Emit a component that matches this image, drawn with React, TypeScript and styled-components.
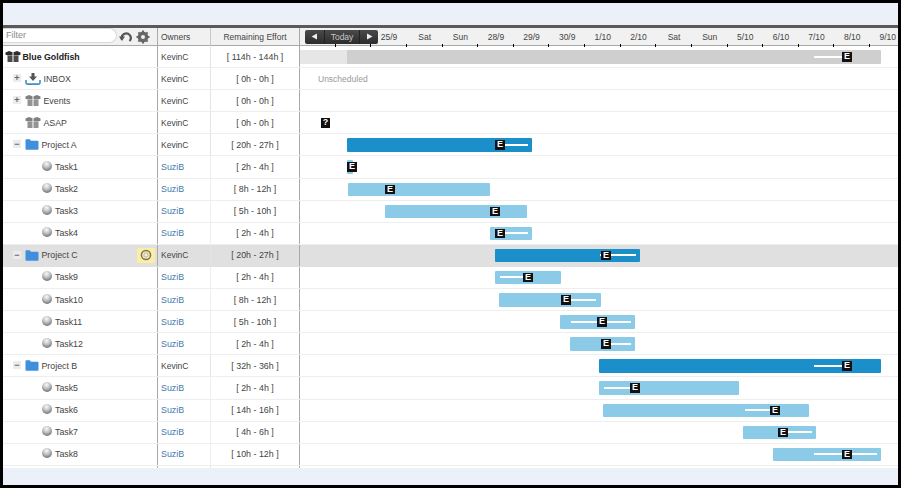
import React from "react";
import styled, { createGlobalStyle } from "styled-components";

const Global = createGlobalStyle`
  html, body { margin: 0; padding: 0; background: #fff; }
  * { box-sizing: border-box; }
`;

const Frame = styled.div`
  width: 901px;
  height: 488px;
  border: 3px solid #000;
  background: #ecf1f9;
  display: flex;
  flex-direction: column;
  font-family: "Liberation Sans", Arial, sans-serif;
  font-size: 8.5px;
  color: #333;
  overflow: hidden;
`;
const TopBand = styled.div`
  height: 25px;
  flex: none;
  border-bottom: 3px solid #5a5a5a;
`;
const Columns = `
  display: grid;
  grid-template-columns: 155px 53px 89px 1fr;
`;
const HeaderRow = styled.div`
  ${Columns}
  height: 18px;
  flex: none;
  background: #f1f1f1;
  border-bottom: 1px solid #a9a9a9;
`;
const FilterCell = styled.div`
  display: flex;
  align-items: flex-start;
  border-right: 1px solid #a9a9a9;
`;
const FilterInput = styled.div`
  width: 114px;
  height: 15px;
  background: #fff;
  border: 1px solid #d8d8d8;
  border-left: none;
  border-radius: 0 8px 8px 0;
  color: #8a8a8a;
  font-size: 9px;
  line-height: 12px;
  padding-left: 3px;
  margin-right: 2px;
`;
const ToolIcon = styled.svg`
  width: 14px;
  height: 14px;
  flex: none;
  margin-top: 1.5px;
  margin-right: 3px;
`;
const HeadOwner = styled.div`
  padding-left: 3px;
  line-height: 19px;
  color: #444;
  border-right: 1px solid #c8c8c8;
`;
const HeadEffort = styled.div`
  text-align: center;
  line-height: 19px;
  color: #444;
  border-right: 1px solid #a9a9a9;
`;
const Scale = styled.div`
  position: relative;
  display: flex;
  overflow: hidden;
`;
const Day = styled.div`
  position: relative;
  flex: none;
  width: 35.63px;
  text-align: center;
  line-height: 18px;
  color: #444;
  &::after {
    content: "";
    position: absolute;
    right: 0;
    bottom: 0;
    width: 1px;
    height: 3px;
    background: #000;
  }
`;
const Nav = styled.div`
  position: absolute;
  left: 5px;
  top: 1.5px;
  width: 73px;
  height: 14px;
  display: flex;
  background: linear-gradient(#4a4a4a, #2c2c2c);
  border-radius: 2px;
  color: #c8c8c8;
`;
const NavButton = styled.div<{ $wide?: boolean }>`
  ${(p) => (p.$wide ? "flex: 1;" : "width: 19px;")}
  display: flex;
  align-items: center;
  justify-content: center;
  line-height: 14px;
  font-size: 8.5px;
  border-left: 1px solid #222;
  &:first-child { border-left: none; }
`;
const Arrow = styled.svg`
  width: 7px;
  height: 7px;
`;
const Rows = styled.div`
  flex: none;
  height: 422px;
  display: flex;
  flex-direction: column;
  background: #fff;
`;
const Row = styled.div<{ $selected?: boolean }>`
  ${Columns}
  flex: none;
  height: 22.1px;
  background: ${(p) => (p.$selected ? "#e0e0e0" : "#fff")};
  border-bottom: 1px solid ${(p) => (p.$selected ? "#e0e0e0" : "#eeeeee")};
`;
const FillerRow = styled.div`
  ${Columns}
  flex: 1;
`;
const TreeCell = styled.div<{ $level?: number }>`
  position: relative;
  display: flex;
  align-items: center;
  padding-left: ${(p) => (p.$level === 2 ? 39 : p.$level === 1 ? 22 : 2)}px;
  border-right: 1px solid #a9a9a9;
  height: 100%;
`;
const Expander = styled.div`
  position: absolute;
  left: 10px;
  top: 6px;
  width: 8px;
  height: 8px;
  background: #ececec;
  color: #666;
  display: flex;
  align-items: center;
  justify-content: center;
  font-size: 9px;
  font-weight: bold;
  line-height: 8px;
`;
const Label = styled.span<{ $bold?: boolean }>`
  color: ${(p) => (p.$bold ? "#222" : "#444")};
  font-weight: ${(p) => (p.$bold ? "bold" : "normal")};
  font-size: 8.8px;
  margin-left: ${(p) => (p.$bold ? 1.5 : 2.5)}px;
`;
const Sphere = styled.span`
  width: 10px;
  height: 10px;
  flex: none;
  border-radius: 50%;
  margin-top: -2px;
  margin-right: 0.5px;
  background: radial-gradient(circle at 45% 28%, #fafafa 0%, #bdbdbd 42%, #4a4a4a 100%);
`;
const Badge = styled.div`
  position: absolute;
  right: 2px;
  top: 3px;
  width: 18px;
  height: 15px;
  border-radius: 2px;
  background: #fdeea4;
  display: flex;
  align-items: center;
  justify-content: center;
`;
const OwnerCell = styled.div<{ $link?: boolean }>`
  padding-left: 3px;
  display: flex;
  align-items: center;
  color: ${(p) => (p.$link ? "#4579ad" : "#444")};
  font-size: ${(p) => (p.$link ? 8.9 : 8.5)}px;
  border-right: 1px solid ${(p) => (p.$link ? "#eeeeee" : "#e4e4e4")};
`;
const EffortCell = styled.div`
  display: flex;
  align-items: center;
  justify-content: center;
  color: #444;
  font-size: 8.9px;
  border-right: 1px solid #a9a9a9;
`;
const ChartCell = styled.div`
  position: relative;
`;
const Bar = styled.div<{ $tone: "summary" | "project" | "task" }>`
  position: absolute;
  top: 4px;
  height: 13.5px;
  border-radius: 1px;
  background: ${(p) =>
    p.$tone === "summary" ? "#cfcfcf" : p.$tone === "project" ? "#1a8fca" : "#8ccbe8"};
`;
const Elapsed = styled.div`
  position: absolute;
  top: 4px;
  height: 13.5px;
  background: #e6e6e6;
`;
const Line = styled.div`
  position: absolute;
  top: 9.5px;
  height: 2px;
  background: #fff;
`;
const Marker = styled.div`
  position: absolute;
  top: 6px;
  width: 9.5px;
  height: 9.5px;
  margin-left: -4.75px;
  background: #111;
  color: #fff;
  font-size: 9px;
  font-weight: bold;
  line-height: 9.5px;
  text-align: center;
`;
const Unscheduled = styled.div`
  position: absolute;
  left: 18px;
  top: 0;
  line-height: 22px;
  color: #999;
`;

const PackageIcon = ({ dark }: { dark?: boolean }) => {
  const flap = dark ? "#2e2e2e" : "#808080";
  const body = dark ? "#4a4a4a" : "#939393";
  return (
    <svg width="16" height="11" viewBox="0 0 16 11">
      <path d="M0.500 1.500 4 0 7.500 1.200V4.500H3L0.500 3.800z" fill={flap} />
      <path d="M15.500 1.500 12 0 8.500 1.200V4.500H13L15.500 3.800z" fill={flap} />
      <path d="M2.500 4.800H7.500V11H2.500z" fill={body} />
      <path d="M8.500 4.800H13.500V11H8.500z" fill={body} />
    </svg>
  );
};
const InboxIcon = () => (
  <svg width="16" height="12" viewBox="0 0 16 12">
    <path d="M1 7v2.800c0 .8.5 1.300 1.300 1.300h11.400c.8 0 1.300-.5 1.300-1.300V7" fill="none" stroke="#3e8fc9" strokeWidth="1.600" />
    <path d="M6.500 0h3v3.500h2.500L8 8 4 3.500h2.500z" fill="#555" />
  </svg>
);
const FolderIcon = () => (
  <svg width="14" height="11" viewBox="0 0 14 11">
    <path d="M0.500 1.300c0-.6.4-1 1-1h3.300l1.200 1.500h6.500c.6 0 1 .4 1 1v6.900c0 .6-.4 1-1 1h-11c-.6 0-1-.4-1-1z" fill="#3f8fdc" />
  </svg>
);
const FaceIcon = () => (
  <svg width="12" height="12" viewBox="0 0 12 12">
    <circle cx="6" cy="6" r="4.600" fill="#efe3b4" stroke="#7c7660" strokeWidth="1.500" />
    <circle cx="6" cy="6" r="2" fill="#f8f3dc" stroke="#b8ae85" strokeWidth="0.800" />
  </svg>
);

type Span = { from: number; to: number; mark?: number; line?: [number, number] };
type Item = {
  name: string;
  level: number;
  kind: "package" | "dark" | "inbox" | "folder" | "task";
  expander?: "+" | "−";
  owner: string;
  effort: string;
  tone?: "summary" | "project" | "task";
  span?: Span;
  selected?: boolean;
};

const P = "project" as const;
const T = "task" as const;
const K = "KevinC";
const S = "SuziB";
const items: Item[] = [
  { name: "Blue Goldfish", level: 0, kind: "dark", owner: K, effort: "[ 114h - 144h ]", tone: "summary", span: { from: 300, to: 881, mark: 847, line: [814, 847] } },
  { name: "INBOX", level: 1, kind: "inbox", expander: "+", owner: K, effort: "[ 0h - 0h ]" },
  { name: "Events", level: 1, kind: "package", expander: "+", owner: K, effort: "[ 0h - 0h ]" },
  { name: "ASAP", level: 1, kind: "package", owner: K, effort: "[ 0h - 0h ]" },
  { name: "Project A", level: 1, kind: "folder", expander: "−", owner: K, effort: "[ 20h - 27h ]", tone: P, span: { from: 347, to: 532, mark: 500, line: [500, 528] } },
  { name: "Task1", level: 2, kind: "task", owner: S, effort: "[ 2h - 4h ]", tone: T, span: { from: 347, to: 353, mark: 352 } },
  { name: "Task2", level: 2, kind: "task", owner: S, effort: "[ 8h - 12h ]", tone: T, span: { from: 348, to: 490, mark: 390 } },
  { name: "Task3", level: 2, kind: "task", owner: S, effort: "[ 5h - 10h ]", tone: T, span: { from: 385, to: 527, mark: 495 } },
  { name: "Task4", level: 2, kind: "task", owner: S, effort: "[ 2h - 4h ]", tone: T, span: { from: 490, to: 532, mark: 500, line: [500, 528] } },
  { name: "Project C", level: 1, kind: "folder", expander: "−", owner: K, effort: "[ 20h - 27h ]", tone: P, selected: true, span: { from: 495, to: 640, mark: 606, line: [600, 636] } },
  { name: "Task9", level: 2, kind: "task", owner: S, effort: "[ 2h - 4h ]", tone: T, span: { from: 495, to: 561, mark: 528, line: [500, 533] } },
  { name: "Task10", level: 2, kind: "task", owner: S, effort: "[ 8h - 12h ]", tone: T, span: { from: 499, to: 601, mark: 566, line: [561, 596] } },
  { name: "Task11", level: 2, kind: "task", owner: S, effort: "[ 5h - 10h ]", tone: T, span: { from: 560, to: 635, mark: 602, line: [571, 631] } },
  { name: "Task12", level: 2, kind: "task", owner: S, effort: "[ 2h - 4h ]", tone: T, span: { from: 570, to: 635, mark: 606, line: [601, 631] } },
  { name: "Project B", level: 1, kind: "folder", expander: "−", owner: K, effort: "[ 32h - 36h ]", tone: P, span: { from: 599, to: 881, mark: 847, line: [814, 850] } },
  { name: "Task5", level: 2, kind: "task", owner: S, effort: "[ 2h - 4h ]", tone: T, span: { from: 599, to: 739, mark: 635, line: [604, 635] } },
  { name: "Task6", level: 2, kind: "task", owner: S, effort: "[ 14h - 16h ]", tone: T, span: { from: 603, to: 809, mark: 775, line: [745, 779] } },
  { name: "Task7", level: 2, kind: "task", owner: S, effort: "[ 4h - 6h ]", tone: T, span: { from: 743, to: 816, mark: 783, line: [778, 812] } },
  { name: "Task8", level: 2, kind: "task", owner: S, effort: "[ 10h - 12h ]", tone: T, span: { from: 773, to: 881, mark: 847, line: [814, 877] } },
];

const days = ["", "", "25/9", "Sat", "Sun", "28/9", "29/9", "30/9", "1/10", "2/10", "Sat", "Sun", "5/10", "6/10", "7/10", "8/10", "9/10"];
const X0 = 300;

const TreeIcon = ({ kind }: { kind: Item["kind"] }) => {
  if (kind === "task") return <Sphere />;
  if (kind === "folder") return <FolderIcon />;
  if (kind === "inbox") return <InboxIcon />;
  return <PackageIcon dark={kind === "dark"} />;
};

export default function App() {
  return (
    <Frame>
      <Global />
      <TopBand />
      <HeaderRow>
        <FilterCell>
          <FilterInput>Filter</FilterInput>
          <ToolIcon viewBox="0 0 14 14">
            <path d="M3 9.500A4.500 4.500 0 1 1 10.500 11" fill="none" stroke="#555" strokeWidth="2.200" />
            <path d="M0 6.500h6L3 11z" fill="#555" />
          </ToolIcon>
          <ToolIcon viewBox="0 0 14 14">
            <circle cx="7" cy="7" r="4" fill="none" stroke="#666" strokeWidth="2.800" />
            <path d="M7 0.500v13M0.500 7h13M2.400 2.400l9.200 9.200M11.600 2.400l-9.200 9.200" stroke="#666" strokeWidth="2" />
            <circle cx="7" cy="7" r="2" fill="#f1f1f1" />
          </ToolIcon>
        </FilterCell>
        <HeadOwner>Owners</HeadOwner>
        <HeadEffort>Remaining Effort</HeadEffort>
        <Scale>
          {days.map((d, i) => (
            <Day key={i}>{d}</Day>
          ))}
          <Nav>
            <NavButton>
              <Arrow viewBox="0 0 7 7"><path d="M6 0.500v6L0.500 3.500z" fill="#eee" /></Arrow>
            </NavButton>
            <NavButton $wide>Today</NavButton>
            <NavButton>
              <Arrow viewBox="0 0 7 7"><path d="M1 0.500v6l5.500-3z" fill="#eee" /></Arrow>
            </NavButton>
          </Nav>
        </Scale>
      </HeaderRow>
      <Rows>
        {items.map((it) => (
          <Row key={it.name} $selected={it.selected}>
            <TreeCell $level={it.level}>
              {it.expander && <Expander>{it.expander}</Expander>}
              <TreeIcon kind={it.kind} />
              <Label $bold={it.level === 0}>{it.name}</Label>
              {it.selected && (
                <Badge>
                  <FaceIcon />
                </Badge>
              )}
            </TreeCell>
            <OwnerCell $link={it.owner === S}>{it.owner}</OwnerCell>
            <EffortCell>{it.effort}</EffortCell>
            <ChartCell>
              {it.span && it.tone && (
                <Bar $tone={it.tone} style={{ left: it.span.from - X0, width: it.span.to - it.span.from }} />
              )}
              {it.level === 0 && <Elapsed style={{ left: 0, width: 47 }} />}
              {it.span?.line && (
                <Line style={{ left: it.span.line[0] - X0, width: it.span.line[1] - it.span.line[0] }} />
              )}
              {it.span?.mark && <Marker style={{ left: it.span.mark - X0 }}>E</Marker>}
              {it.name === "INBOX" && <Unscheduled>Unscheduled</Unscheduled>}
              {it.name === "ASAP" && <Marker style={{ left: 25.5 }}>?</Marker>}
            </ChartCell>
          </Row>
        ))}
        <FillerRow>
          <TreeCell />
          <OwnerCell />
          <EffortCell />
          <ChartCell />
        </FillerRow>
      </Rows>
    </Frame>
  );
}
